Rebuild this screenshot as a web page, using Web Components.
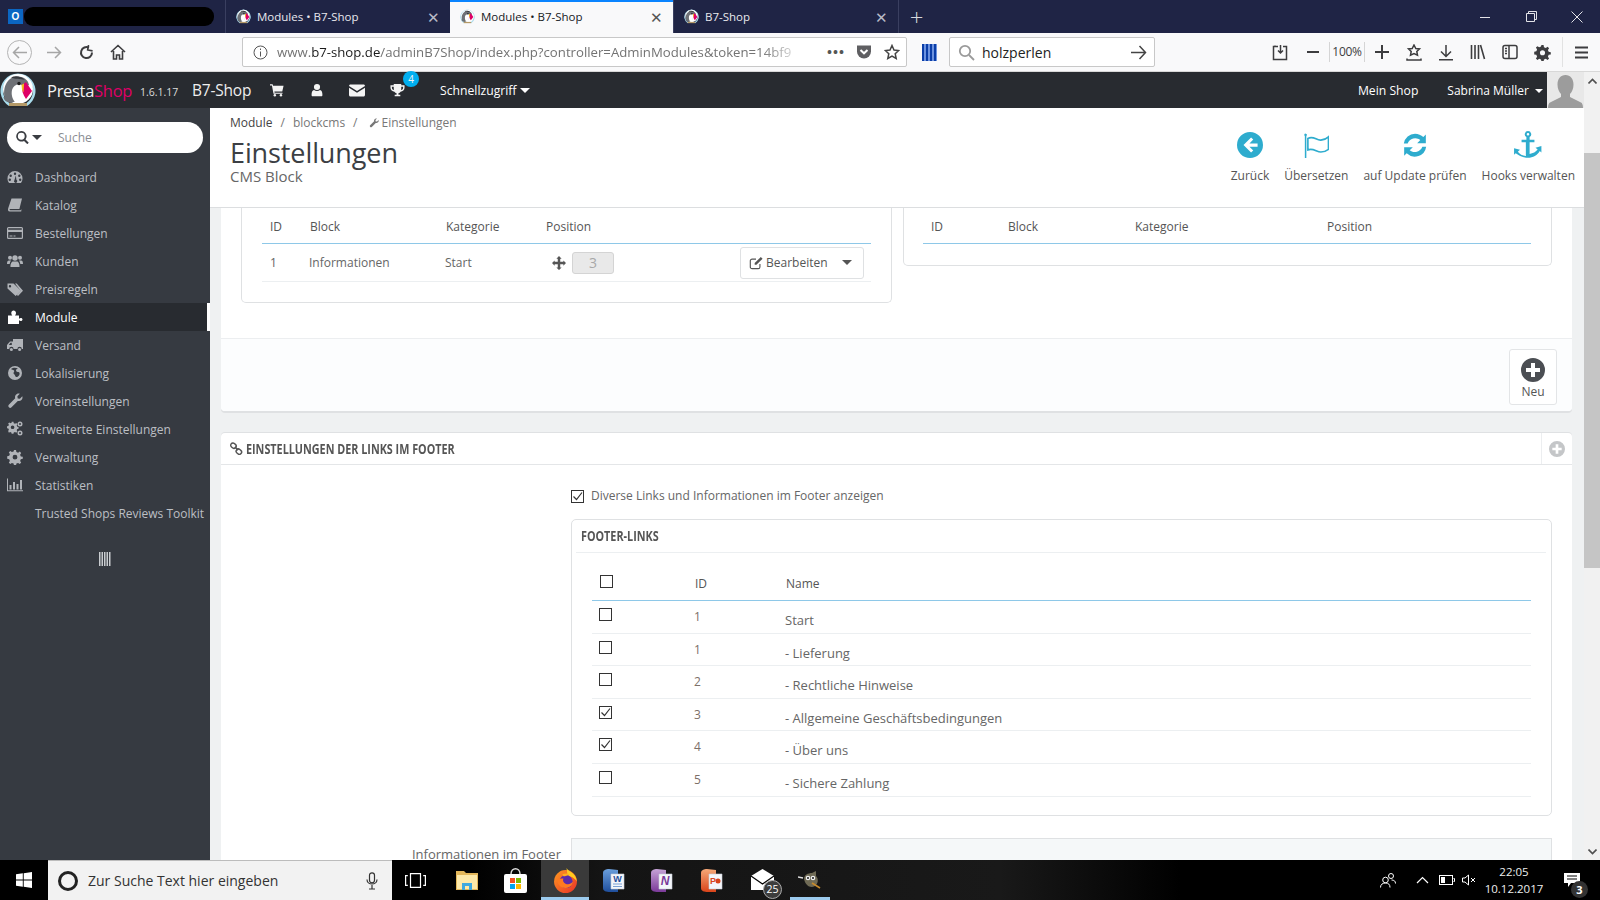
<!DOCTYPE html>
<html lang="de"><head><meta charset="utf-8"><title>Modules • B7-Shop</title>
<style>
html,body{margin:0;height:900px;overflow:hidden;background:#eff1f2}
body{display:flex;flex-direction:column;font-family:"Open Sans","Noto Sans",sans-serif}
</style></head><body>
<browser-chrome></browser-chrome>
<admin-workspace></admin-workspace>
<win-taskbar></win-taskbar>
<script>
const P={
dashboard:'<path fill-rule="evenodd" d="M8 2a7.5 7.5 0 0 0-7.5 7.5c0 1.7.6 3.2 1.6 4.5h11.800c1-1.300 1.600-2.800 1.600-4.500A7.500 7.500 0 0 0 8 2zM8 3.500a1.200 1.200 0 1 1 0 2.400 1.200 1.200 0 0 1 0-2.400zM3.700 5.500a1.200 1.200 0 1 1 0 2.400 1.200 1.200 0 0 1 0-2.400zM12.300 5.500a1.200 1.200 0 1 1 0 2.400 1.200 1.200 0 0 1 0-2.400zM2.800 9.500a1.200 1.200 0 1 1 0 2.400 1.200 1.200 0 0 1 0-2.400zM13.200 9.500a1.200 1.200 0 1 1 0 2.400 1.200 1.200 0 0 1 0-2.400zM8.800 6.500l.6 4.300a1.600 1.600 0 1 1-2 .4z"/>',
book:'<path d="M4.500 1.500H15l-2.600 10.500H3.200c-.8 0-.9 1.200 0 1.200h10.300l1-.9-.3 2.200H2.700C1 14.500.7 12.800 1.200 11.200z"/>',
card:'<path fill-rule="evenodd" d="M1.500 2h13A1.500 1.500 0 0 1 16 3.500v9a1.500 1.500 0 0 1-1.500 1.500h-13A1.500 1.500 0 0 1 0 12.500v-9A1.500 1.500 0 0 1 1.500 2zM1.200 3.200v1.600h13.600V3.200zM1.200 7v5.800h13.600V7zM2.500 10.500h3v1h-3zM6.500 10.500h2v1h-2z"/>',
users:'<circle cx="8" cy="5" r="2.700"/><circle cx="3" cy="4.800" r="2"/><circle cx="13" cy="4.800" r="2"/><path d="M3.500 14c-.3-3 1-5.500 2.500-5.500h4c1.500 0 2.800 2.500 2.500 5.500zM0 11c0-2.500.7-3.500 2-3.500h2C3.200 8.500 2.800 9.800 2.700 11zM16 11c0-2.500-.7-3.500-2-3.500h-2c.8 1 1.200 2.300 1.300 3.500z"/>',
tags:'<path fill-rule="evenodd" d="M.5 2.500h6L14 9.800l-5.300 5.200L.5 7.500zM3 4a1.200 1.200 0 1 0 0 2.400A1.200 1.200 0 0 0 3 4z"/><path d="M8 2.500h1.700L16 9.800l-5 5.200-1.200-1.200 3.800-4z"/>',
puzzle:'<path d="M1 6.500h4.300C4.500 5.500 4.300 4.800 4.300 4c0-1.400 1-2.500 2.300-2.500S9 2.600 9 4c0 .8-.2 1.500-1 2.500h4v3.200c.8-.5 1.200-.7 1.800-.7 1 0 1.700.7 1.700 1.500s-.7 1.500-1.700 1.500c-.6 0-1-.2-1.800-.7V15H1z"/>',
truck:'<path fill-rule="evenodd" d="M6 2h10v10h-1.200a2.200 2.200 0 0 0-4.400 0H6.600a2.200 2.200 0 0 0-4.400 0H0V8l3-3.500h3zM1.800 8h3V5.700H3.600z"/><circle cx="4.400" cy="12.500" r="1.500"/><circle cx="12.600" cy="12.500" r="1.500"/>',
globe:'<path fill-rule="evenodd" d="M8 1a7 7 0 1 1 0 14A7 7 0 0 1 8 1zM4 4c1 1 2 .5 3 1.500S5.500 8 7 9s1 3 2.500 3 3.500-2 3-4-2-.5-3-1.500S9 4 11 3.500C9 2.300 6 2.300 4 4z"/>',
wrench:'<path d="M15.500 4.500c0 2.400-2.400 4.200-4.700 3.400L4.500 14.200a1.800 1.800 0 0 1-2.700-2.500l6.400-6.400C7.400 3 9.200.6 11.500.6c.5 0 .9.100 1.300.2L10.400 3.200l.3 2.200 2.200.3 2.400-2.400c.1.300.2.700.2 1.200z"/>',
gears:'<path fill-rule="evenodd" d="M4.500 3h2l.3 1.500 1.400.6 1.300-.8 1.300 1.300-.8 1.300.6 1.400 1.400.3v2l-1.400.3-.6 1.400.8 1.300-1.300 1.300-1.300-.8-1.400.6-.3 1.300h-2l-.3-1.300-1.400-.6-1.300.8L.7 13.100l.8-1.300-.6-1.400L-.5 10V8l1.400-.3.6-1.400-.8-1.300L2 3.700l1.300.8 1.400-.6zM5.500 7a2 2 0 1 0 0 4 2 2 0 0 0 0-4z" transform="translate(.5 -2) scale(.92)"/><path fill-rule="evenodd" d="M13 .5a2.500 2.500 0 1 1 0 5 2.500 2.500 0 0 1 0-5zm0 1.500a1 1 0 1 0 0 2 1 1 0 0 0 0-2zM13 9.500a2.500 2.500 0 1 1 0 5 2.500 2.500 0 0 1 0-5zm0 1.500a1 1 0 1 0 0 2 1 1 0 0 0 0-2z"/>',
gear:'<path fill-rule="evenodd" d="M7 1h2l.4 2 1.700.7 1.700-1.100 1.400 1.400-1.100 1.700.7 1.700 2 .4v2l-2 .4-.7 1.700 1.100 1.700-1.400 1.400-1.700-1.100-1.700.7-.4 2H7l-.4-2-1.700-.7-1.700 1.100-1.400-1.400 1.100-1.700-.7-1.700-2-.4V7.200l2-.4.7-1.700-1.100-1.700 1.400-1.400 1.700 1.100 1.700-.7zM8 5.800a2.400 2.400 0 1 0 0 4.800 2.400 2.400 0 0 0 0-4.800z"/>',
chart:'<path d="M0 1.500h1v11.800h15v1H0zM2.500 8h2v4.500h-2zM6 5h2v7.500H6zM9.500 7h2v5.500h-2zM13 3h2v9.500h-2z"/>',
search:'<path fill-rule="evenodd" d="M6.500 0a6.500 6.500 0 0 1 5.200 10.400l4 4-1.800 1.800-4-4A6.500 6.500 0 1 1 6.500 0zm0 2.300a4.200 4.200 0 1 0 0 8.400 4.200 4.200 0 0 0 0-8.400z"/>',
cart:'<path d="M0 1.500h3l.5 1.700H15.500l-1.500 6.500H5l.3 1.300h9v1.300H4L2.200 2.800H0z"/><circle cx="5.500" cy="14" r="1.400"/><circle cx="12.500" cy="14" r="1.400"/>',
user:'<circle cx="8" cy="4.500" r="3.500"/><path d="M3 15c-.8 0-1.200-.6-1.200-1.400 0-3 .8-5.300 2.800-5.600 1 .8 2 1.200 3.400 1.200s2.400-.4 3.400-1.200c2 .3 2.800 2.600 2.800 5.600 0 .8-.4 1.400-1.200 1.400z"/>',
mail:'<path d="M1.500 2.500h13c.8 0 1.500.7 1.500 1.500L8 9 0 4c0-.8.7-1.500 1.500-1.500zM0 5.800l8 5 8-5V13c0 .8-.7 1.500-1.500 1.500h-13C.7 14.500 0 13.800 0 13z"/>',
trophy:'<path fill-rule="evenodd" d="M4 1h8v1.500h3.500V5c0 2.500-2 4-4.200 4.300-.5.800-1.300 1.300-2.300 1.500V12.500h2V14H5v-1.500h2v-1.700c-1-.2-1.800-.7-2.300-1.500C2.500 9 .5 7.500.5 5V2.500H4zM2 4v1c0 1.200.8 2 2.200 2.500C4 6.500 4 5 4 4zM14 4h-2c0 1 0 2.500-.2 3.500C13.200 7 14 6.200 14 5z"/>',
back:'<path fill-rule="evenodd" d="M12 0a12 12 0 1 1 0 24 12 12 0 0 1 0-24zM13 5 6 12l7 7 2-2-3.500-3.500H19v-3h-7.500L15 7z"/>',
flag:'<path d="M2.500 1.500a1.200 1.200 0 0 1 .6 2.200V24H1.700V3.700a1.200 1.200 0 0 1 .8-2.200z"/><path fill="none" stroke="currentColor" stroke-width="1.500" d="M4.500 6c5-3 8 2 12 1.500 3-.3 5.500-1.500 7-3V16c-2 1.500-4 2.500-7 2.500-4 0-7-4-12-2z"/>',
sync:'<path d="M12 1.500c3 0 5.700 1.200 7.700 3.100l2.300-2.300v8h-8l2.900-2.900A7.500 7.500 0 0 0 5.200 10.500H1.700A10.700 10.700 0 0 1 12 1.500zM2 14h8l-2.900 2.900a7.500 7.500 0 0 0 11.700-3.400h3.500A10.700 10.700 0 0 1 4.300 19.700L2 22z"/>',
anchor:'<path fill-rule="evenodd" d="M14 0a3 3 0 0 1 1.500 5.600V8H20v2.500h-4.500v10.800c3-.3 6-1.800 7.500-4l-2-1.800 5.500-1.500v6l-1.500-1.300C23 22.500 18.500 25 14 25S5 22.500 2.500 20.700L1 22v-6l5.500 1.500-2 1.800c1.500 2.200 4.500 3.700 7.500 4V10.500H8V8h4.500V5.600A3 3 0 0 1 14 0zm0 1.800a1.200 1.200 0 1 0 0 2.400 1.200 1.200 0 0 0 0-2.400z"/>',
plusc:'<path fill-rule="evenodd" d="M12 0a12 12 0 1 1 0 24 12 12 0 0 1 0-24zM10 5v5H5v4h5v5h4v-5h5v-4h-5V5z"/>',
link:'<g fill="none" stroke="currentColor" stroke-width="1.800"><rect x="1" y="1.500" width="7" height="5.500" rx="2.700" transform="rotate(40 4 4)"/><rect x="8" y="9" width="7" height="5.500" rx="2.700" transform="rotate(40 11 11)"/><path d="M6 6l4 4"/></g>',
move:'<path d="M8 0l3 3H9.400v3.600H13V5l3 3-3 3V9.400H9.400V13H11l-3 3-3-3h1.600V9.400H3V11L0 8l3-3v1.600h3.600V3H5z"/>',
edit:'<path fill="none" stroke="currentColor" stroke-width="1.300" d="M12.500 9v3.500a2 2 0 0 1-2 2h-7a2 2 0 0 1-2-2v-7a2 2 0 0 1 2-2H8"/><path d="M13.500 1 15.500 3l-7 7H6.500V8z"/>'
};
function def(name,css,html){
 customElements.define(name,class extends HTMLElement{
  connectedCallback(){ if(this.shadowRoot)return; const s=this.attachShadow({mode:'open'}); s.innerHTML='<style>'+css+'</style>'+html(this); }
 });
}
const a=(e,n,d='')=>e.getAttribute(n)??d;
def('x-icon',':host{display:inline-flex;line-height:0;flex:none}svg{display:block}',e=>{
 const s=a(e,'size','16'),w=a(e,'w',s),vb=a(e,'vb','0 0 16 16');
 return `<svg width="${w}" height="${s}" viewBox="${vb}" fill="currentColor" aria-hidden="true">${P[a(e,'name')]||''}</svg>`;
});
def('ps-logo',':host{display:inline-flex;line-height:0;flex:none}',e=>{
 const s=a(e,'size','16');
 return `<svg width="${s}" height="${s}" viewBox="0 0 36 36" aria-hidden="true"><path d="M9 34A17.500 17.500 0 1 1 27 34l-1-2.500A15 15 0 1 0 10 31.500z" fill="#a9dcec"/><circle cx="18" cy="17" r="15" fill="#fff"/><path d="M4.500 25C2.500 13 9 4.500 17.500 4.500c6 0 10.500 3 11.500 8.500l-7 3-3 12-8 3c-4-1-7-2-7.500-6z" fill="#6e7176"/><path d="M11 5.500c4-2 10-1.500 14 2.500-5-1.500-10-.5-14-2.500z" fill="#35383d"/><path d="M12 18c1-4 4-6 8-5.500 2 .2 3 1.200 3 3l-3 12.500-4.500 2.500c-3-3-4.500-7.500-3.500-12.500z" fill="#fff"/><circle cx="19" cy="11.500" r="1.700" fill="#1c1c1c"/><path d="M22 13l4-3 6 9-6 8c-3-4-4.500-9-4-14z" fill="#df0067"/><path d="M21.500 13l2.500-1.500-.5 9-1.500-3z" fill="#f5c518"/><path d="M9 31h18v3H9z" fill="#b59a68"/></svg>`;
});

def('browser-tab',`:host{display:flex;align-items:center;box-sizing:border-box;height:33px;width:225px;padding:0 10px 0 10px;color:#e9e9ee;font:11.500px "Open Sans",sans-serif;border-left:1px solid #3a3f60}
:host([active]){background:#f9f9fa;color:#16181d;border-top:2px solid #0a84ff;border-left:0;width:223px;padding-bottom:2px}
:host([active])+*{border-left:0}
.t{flex:1;margin-left:6px;white-space:nowrap}.x{font:300 15px "Open Sans",sans-serif;color:#b8bac5}:host([active]) .x{color:#555}`,
e=>`<ps-logo size="15"></ps-logo><span class="t"><slot></slot></span><span class="x">✕</span>`);

def('tb-btn',':host{display:flex;align-items:center;justify-content:center;color:#3d3d3f;flex:none;width:32px;height:38px}',e=>`<slot></slot>`);

def('browser-chrome',`:host{display:block;flex:none;height:72px;font-family:"Open Sans",sans-serif}
.title{height:33px;background:#1f2445;display:flex;align-items:center;color:#ddd}
.pin{width:24px;display:flex;padding-left:8px;box-sizing:border-box}
.o{width:15px;height:15px;background:#0b66c2;color:#fff;font:700 10px/15px "Liberation Sans",sans-serif;text-align:center}
.black{width:190px;height:19px;background:#000;border-radius:9px;margin-right:11px}
.plus{width:36px;text-align:center;font:300 24px/33px "Open Sans",sans-serif;border-left:1px solid #3a3f60;box-sizing:border-box;color:#d6d7dd}
.sp{flex:1}.win{width:46px;text-align:center;display:flex;justify-content:center;color:#e3e3e8}
.bar{height:38px;background:#f9f9fa;display:flex;align-items:center;border-bottom:1px solid #d8d8d8;color:#3d3d3f}
.navback{width:25px;height:25px;border:1px solid #b4b4b4;border-radius:50%;margin:0 6px 0 7px;display:flex;align-items:center;justify-content:center;box-sizing:border-box;color:#a6a6a6}
.url{width:665px;height:30px;box-sizing:border-box;margin-left:108px;background:#fff;border:1px solid #c8c8c8;border-radius:2px;display:flex;align-items:center;padding-left:10px;font-size:13.200px;color:#737373;white-space:nowrap;overflow:hidden}
.url b{font-weight:400;color:#1a1a1a}
.u{width:520px;overflow:hidden;margin-left:9px;-webkit-mask-image:linear-gradient(90deg,#000 93%,rgba(0,0,0,.2))}
.grid{width:15px;height:17px;background:repeating-linear-gradient(90deg,#0b3ea8 0 2px,#6d93df 2px 4px);margin:0 12px 0 15px;flex:none}
.search{width:206px;height:30px;box-sizing:border-box;background:#fff;border:1px solid #c8c8c8;border-radius:2px;display:flex;align-items:center;padding:0 7px 0 8px;font-size:14px;color:#222;flex:none}
.search span{flex:1;margin-left:7px}
.mini{display:flex;align-items:center;margin-left:109px}
.i{width:32px;display:flex;justify-content:center;flex:none}
.z{font-size:12px;width:34px;text-align:center;border:solid #d5d5d5;border-width:0 1px;line-height:20px;letter-spacing:-.3px}`,
e=>`<div class="title"><div class="pin"><div class="o">O</div></div><div class="black"></div>
<browser-tab>Modules • B7-Shop</browser-tab><browser-tab active>Modules • B7-Shop</browser-tab><browser-tab>B7-Shop</browser-tab>
<div class="plus">+</div><div class="sp"></div>
<div class="win"><svg width="10" height="10"><path d="M0 5.500h10" stroke="currentColor"/></svg></div>
<div class="win"><svg width="11" height="11" fill="none" stroke="currentColor"><path d="M.5 2.500h8v8h-8zM2.500 2.500v-2h8v8h-2"/></svg></div>
<div class="win"><svg width="12" height="12" stroke="currentColor"><path d="M.5.500l11 11M11.500.500l-11 11"/></svg></div></div>
<div class="bar"><div class="navback"><svg width="15" height="13" fill="none" stroke="currentColor" stroke-width="1.500"><path d="M7 1 1.500 6.500 7 12M2 6.500h13"/></svg></div>
<tb-btn><svg width="15" height="13" fill="none" stroke="#a6a6a6" stroke-width="1.500"><path d="M8 1l5.500 5.500L8 12M13 6.500H0"/></svg></tb-btn>
<tb-btn><svg width="15" height="15" fill="none" stroke="currentColor" stroke-width="2"><path d="M13 7.500A5.500 5.500 0 1 1 10 2.700"/><path d="M9 0v5h5" stroke-width="1.600" stroke-linejoin="miter" transform="rotate(10 9 3)"/></svg></tb-btn>
<tb-btn><svg width="16" height="16" fill="none" stroke="currentColor" stroke-width="1.600"><path d="M1 8l7-6.500L15 8M3.500 7v8h3v-4h3v4h3V7"/></svg></tb-btn>
<div class="url"><svg style="flex:none" width="15" height="15" fill="none" stroke="#555"><circle cx="7.500" cy="7.500" r="6.500"/><path d="M7.500 6.500v5M7.500 3.500v1.500"/></svg>
<div class="u">www.<b>b7-shop.de</b>/adminB7Shop/index.php?controller=AdminModules&amp;token=14bf9</div>
<span style="margin-left:30px;letter-spacing:1px;font-weight:700;color:#555;width:23px">•••</span>
<svg style="margin-left:6px;flex:none" width="16" height="16"><path d="M1 1.500h14v6a7 7 0 0 1-14 0z" fill="#5f5f62"/><path d="M4.500 6l3.500 3.300L11.500 6" stroke="#fff" stroke-width="2" fill="none"/></svg>
<svg style="margin-left:12px;flex:none" width="16" height="16" fill="none" stroke="#444" stroke-width="1.500"><path d="M8 1.500l2 4.500 4.700.5-3.500 3.200 1 4.700L8 12l-4.200 2.400 1-4.700L1.300 6.500 6 6z"/></svg></div>
<div class="grid"></div>
<div class="search"><svg width="17" height="17" fill="none" stroke="#9a9a9a" stroke-width="1.800"><circle cx="7" cy="7" r="5.200"/><path d="M11 11l5 5"/></svg><span>holzperlen</span><svg width="16" height="15" fill="none" stroke="#444" stroke-width="1.500"><path d="M8.500 1l6 6.500-6 6.500M14 7.500H0"/></svg></div>
<div class="mini">
<div class="i"><svg width="16" height="17" fill="none" stroke="currentColor" stroke-width="1.500"><path d="M6 2.500H3v-1M11 2.500h3.500v13h-13v-13H6M8.500 1v8M6 6.500l2.500 2.500L11 6.500"/></svg></div>
<div class="i" style="width:33px"><svg width="12" height="4"><path d="M0 2h12" stroke="currentColor" stroke-width="2"/></svg></div>
<div class="z">100%</div>
<div class="i" style="width:33px"><svg width="14" height="14"><path d="M7 0v14M0 7h14" stroke="currentColor" stroke-width="2"/></svg></div>
<div class="i"><svg width="16" height="17" fill="none" stroke="currentColor" stroke-width="1.500"><path d="M8 1l1.800 3.500 3.700.4-2.700 2.600.7 3.700L8 9.500l-3.500 1.700.7-3.700-2.700-2.600 3.700-.4zM1 14.500v1.500h14v-1.500"/></svg></div>
<div class="i"><svg width="16" height="17" fill="none" stroke="currentColor" stroke-width="1.500"><path d="M8 1v11M3 7.500l5 5 5-5M1 15.800h14"/></svg></div>
<div class="i"><svg width="16" height="16" fill="none" stroke="currentColor" stroke-width="1.600"><path d="M1.500 1v14M5 1v14M8.500 1v14M10.500 1l4 14"/></svg></div>
<div class="i"><svg width="16" height="16" fill="none" stroke="currentColor" stroke-width="1.500"><rect x="1" y="1.500" width="14" height="13" rx="2"/><path d="M7 1.500v13M3 4.500h2M3 7h2M3 9.500h2"/></svg></div>
<div class="i"><x-icon name="gear" size="17"></x-icon></div>
<div class="i" style="width:1px;height:30px;background:#e2e2e2;margin:0 0 0 4px"></div>
<div class="i" style="width:36px"><svg width="13" height="13"><path d="M0 1.500h13M0 6.500h13M0 11.500h13" stroke="currentColor" stroke-width="2"/></svg></div>
</div></div>`);

def('admin-workspace',`:host{flex:1;min-height:0;display:grid;grid-template:36px minmax(0,1fr)/210px minmax(0,1fr) 16px}
ps-header{grid-column:1/3}ps-scrollbar{grid-column:3;grid-row:1/3}main{overflow:hidden;min-width:0;display:flex;flex-direction:column}
.content{padding:0 12px 0 11px;display:flex;flex-direction:column;gap:22px}`,
e=>`<ps-header></ps-header><ps-scrollbar></ps-scrollbar><ps-sidebar></ps-sidebar>
<main><ps-pagehead></ps-pagehead><div class="content"><ps-blocks></ps-blocks><ps-footerform></ps-footerform></div></main>`);

def('ps-header',`:host{display:flex;align-items:center;background:#282b30;color:#fff;font:12.200px "Open Sans",sans-serif;white-space:nowrap}
.brand{font:400 16.500px "Open Sans",sans-serif;margin-left:11px;letter-spacing:-.3px;width:93px;color:#f2f2f2}.brand i{font-style:normal;color:#df0067}
.ver{font-size:10.500px;width:52px;color:#ddd;padding-top:3px}.shop{font-size:15.500px;width:65px;color:#eee;letter-spacing:-.2px}
.ic{width:40px;display:flex;justify-content:center;color:#f4f4f4;position:relative}
.badge{position:absolute;left:26px;top:-12px;width:16px;height:16px;border-radius:50%;background:#00aff0;font-size:10px;line-height:16px;text-align:center}
.quick{margin-left:23px}.sp{flex:1}.c{display:inline-block;border:5px solid transparent;border-top-color:currentColor;border-bottom:0;margin-left:3px;vertical-align:2px}
.me{margin:0 29px 0 0}.who{margin-right:4px;font-size:12px}
.av{width:37px;height:36px;background:#e8e8e8;display:flex;align-items:flex-end;justify-content:center}`,
e=>`<ps-logo size="36"></ps-logo><span class="brand">Presta<i>Shop</i></span><span class="ver">1.6.1.17</span><span class="shop">B7-Shop</span>
<span class="ic"><x-icon name="cart" size="14"></x-icon></span><span class="ic"><x-icon name="user" size="14"></x-icon></span><span class="ic"><x-icon name="mail" size="16"></x-icon></span><span class="ic"><x-icon name="trophy" size="15"></x-icon><span class="badge">4</span></span>
<span class="quick">Schnellzugriff<span class="c"></span></span><span class="sp"></span><span class="me">Mein Shop</span><span class="who">Sabrina Müller <span class="c" style="border-width:4px 4px 0"></span></span>
<span class="av"><svg width="35" height="33" viewBox="0 0 35 33" fill="#9c9c9c"><path d="M17.500 0c5 0 8 4 8 9.500 0 4-1.500 7.500-3.500 9.500v3l11 5.500c1 .5 2 2 2 5.500H0c0-3.500 1-5 2-5.500L13 22v-3c-2-2-3.500-5.500-3.500-9.500C9.500 4 12.500 0 17.500 0z"/></svg></span>`);

def('ps-scrollbar',`:host{display:flex;flex-direction:column;background:#f1f1f1;align-items:stretch;min-height:0}
.ar{height:17px;display:flex;align-items:center;justify-content:center;color:#505050}
.thumb{height:415px;margin-top:64px;background:#c5c5c5}.sp{flex:1}`,
e=>`<div class="ar"><svg width="9" height="6" fill="none" stroke="currentColor" stroke-width="1.600"><path d="M.5 5.500l4-4 4 4"/></svg></div><div class="thumb"></div><div class="sp"></div><div class="ar"><svg width="9" height="6" fill="none" stroke="currentColor" stroke-width="1.600"><path d="M.5.500l4 4 4-4"/></svg></div>`);

def('side-item',`:host{display:flex;align-items:center;height:28px;color:#bcbfc4;font:12px "Open Sans",sans-serif;white-space:nowrap;box-sizing:border-box}
.i{width:35px;flex:none;display:flex;justify-content:center;padding-right:5px;box-sizing:border-box;color:#b0b3b8}
:host([active]){background:#282b30;color:#fff;border-right:3px solid #fff}:host([active]) .i{color:#fff}`,
e=>`<span class="i">${a(e,'icon')?`<x-icon name="${a(e,'icon')}" size="16"></x-icon>`:''}</span><slot></slot>`);

def('ps-sidebar',`:host{display:block;background:#363a41;min-height:0;overflow:hidden}
.s{margin:14px 7px 10px;height:31px;background:#fff;border-radius:16px;display:flex;align-items:center;padding-left:9px;color:#3a3d42;font:12px "Open Sans",sans-serif}
.s span{color:#8a8d92;margin-left:16px}.c{border:5px solid transparent;border-top-color:#3a3d42;border-bottom:0;margin-left:3px}
.col{display:flex;justify-content:center;margin-top:25px}`,
e=>`<div class="s"><x-icon name="search" size="13"></x-icon><i class="c"></i><span>Suche</span></div>
<side-item icon="dashboard">Dashboard</side-item><side-item icon="book">Katalog</side-item><side-item icon="card">Bestellungen</side-item><side-item icon="users">Kunden</side-item><side-item icon="tags">Preisregeln</side-item><side-item icon="puzzle" active>Module</side-item><side-item icon="truck">Versand</side-item><side-item icon="globe">Lokalisierung</side-item><side-item icon="wrench">Voreinstellungen</side-item><side-item icon="gears">Erweiterte Einstellungen</side-item><side-item icon="gear">Verwaltung</side-item><side-item icon="chart">Statistiken</side-item><side-item>Trusted Shops Reviews Toolkit</side-item>
<div class="col"><svg width="12" height="14" fill="#c9ccd0"><path d="M0 0h1.500v14H0zM2.500 0H4v14H2.500zM5 0h1.500v14H5zM7.500 0H9v14H7.500zM10 0h1.500v14H10z"/></svg></div>`);

def('head-tool',`:host{display:flex;flex-direction:column;align-items:center;gap:8px;color:#555;font:12px "Open Sans",sans-serif;white-space:nowrap}.i{color:#2eacce;height:28px;display:flex;align-items:center}`,
e=>`<span class="i"><x-icon name="${a(e,'icon')}" size="${a(e,'size','26')}" vb="${a(e,'vb','0 0 24 24')}"></x-icon></span><slot></slot>`);

def('ps-pagehead',`:host{display:flex;flex:none;height:100px;box-sizing:border-box;background:#fff;border-bottom:1px solid #dcdee0;padding:0 9px 0 20px;justify-content:space-between;color:#555}
.crumb{font-size:12px;margin-top:6px;color:#777;display:flex;gap:8px;align-items:center}.crumb b{font-weight:400;color:#444}
h1{font:400 27px/31px "Open Sans",sans-serif;margin:6px 0 0;color:#3c3f44;letter-spacing:-.1px}h2{font:400 15px/16px "Open Sans",sans-serif;margin:0;color:#666}
.tools{display:flex;gap:15px;padding-top:23px;align-items:flex-start}`,
e=>`<div><div class="crumb"><b>Module</b><span>/</span><span>blockcms</span><span>/</span><span style="display:flex;gap:3px;align-items:center;margin-left:3px"><x-icon name="wrench" size="10"></x-icon>Einstellungen</span></div><h1>Einstellungen</h1><h2>CMS Block</h2></div>
<div class="tools"><head-tool icon="back">Zurück</head-tool><head-tool icon="flag">Übersetzen</head-tool><head-tool icon="sync">auf Update prüfen</head-tool><head-tool icon="anchor" vb="0 0 28 26" size="30">Hooks verwalten</head-tool></div>`);

def('ps-blocks',`:host{display:block;background:#fff;border-radius:0 0 4px 4px;box-shadow:0 2px 0 #dfe1e3;font:12px "Open Sans",sans-serif;color:#666}
.top{display:flex;gap:11px;padding:0 20px;height:130px;align-items:flex-start}
.card{box-sizing:border-box;background:#fff;border:1px solid #dfe1e3;border-top:0;border-radius:0 0 5px 5px;padding:0 20px}
.l{width:651px;height:95px}.r{width:649px;height:58px}
.h,.row{display:grid;align-items:center}
.h{height:36px;box-sizing:border-box;padding-top:2px;border-bottom:1px solid #8ec8e8;color:#555}
.l .h,.l .row{grid-template-columns:48px 136px 100px 1fr}.l .h span:first-child,.l .row span:first-child{padding-left:8px}
.r .h{grid-template-columns:85px 127px 192px 1fr;margin-left:-1px}.r .h span:first-child{padding-left:8px}
.row{height:38px;box-sizing:border-box;border-bottom:1px solid #eceff1}
.row>span:nth-child(2){margin-left:-1px}.row>span:nth-child(3){margin-left:-1px}
.pos{display:flex;align-items:center;justify-content:space-between;padding-right:7px;color:#555}
.num{width:42px;height:22px;box-sizing:border-box;background:#e9e9e9;border:1px solid #d4d4d4;border-radius:3px;color:#a8a8a8;text-align:center;line-height:20px;font-size:14px;margin-left:6px;margin-right:auto}
.btn{width:124px;height:32px;box-sizing:border-box;border:1px solid #dfe1e3;border-radius:3px;display:flex;align-items:center;padding-left:8px;gap:3px;color:#555;background:#fff}
.car{border:5px solid transparent;border-top-color:#555;border-bottom:0;margin-left:auto;margin-right:11px}
.foot{height:73px;box-sizing:border-box;background:#fcfdfe;border-top:1px solid #eceef0;border-radius:0 0 4px 4px;display:flex;justify-content:flex-end;padding:10px 15px 0 0}
.neu{width:48px;height:56px;box-sizing:border-box;background:#fff;border:1px solid #e3e5e7;border-radius:3px;display:flex;flex-direction:column;align-items:center;padding-top:8px;color:#555;gap:1px;font-size:12px}
.neu x-icon{color:#4b4e53}`,
e=>`<div class="top"><div class="card l"><div class="h"><span>ID</span><span>Block</span><span>Kategorie</span><span>Position</span></div>
<div class="row"><span>1</span><span>Informationen</span><span>Start</span><div class="pos"><x-icon name="move" size="14" style="margin-left:6px"></x-icon><span class="num">3</span><span class="btn"><x-icon name="edit" size="14"></x-icon>Bearbeiten<i class="car"></i></span></div></div></div>
<div class="card r"><div class="h"><span>ID</span><span>Block</span><span>Kategorie</span><span>Position</span></div></div></div>
<div class="foot"><div class="neu"><x-icon name="plusc" size="24" vb="0 0 24 24"></x-icon>Neu</div></div>`);

def('ps-check',`:host{display:inline-flex;width:13px;height:13px;box-sizing:border-box;border:1px solid #333;background:#fff;flex:none;align-items:center;justify-content:center}svg{display:block}`,
e=>e.hasAttribute('checked')?`<svg width="11" height="11" fill="none" stroke="#333" stroke-width="1.200"><path d="M1.500 5.500 4.500 8.500 10 1.500"/></svg>`:'');

def('footer-row',`:host{display:grid;grid-template-columns:102px 91px 1fr;height:32.600px;box-sizing:border-box;border-bottom:1px solid #eceff1;font:13px "Open Sans",sans-serif;color:#666;align-items:start}
ps-check{margin:7px 0 0 7px}.id{margin-top:7px;font-size:12px;color:#7c6f68;line-height:18px}.n{margin-top:10px;line-height:18px}`,
e=>`<span><ps-check ${e.hasAttribute('checked')?'checked':''}></ps-check></span><span class="id">${a(e,'num')}</span><span class="n"><slot></slot></span>`);

def('narrow-text',`:host{display:inline-block;white-space:nowrap;font:700 13.500px "Open Sans",sans-serif;transform:scaleX(.8);transform-origin:0 50%}`,e=>`<slot></slot>`);

def('ps-footerform',`:host{display:block;background:#fff;border-radius:4px 4px 0 0;box-shadow:0 -1px 0 #dfe1e3;font:12px "Open Sans",sans-serif;color:#666;height:500px}
.head{height:32px;box-sizing:border-box;border-bottom:1px solid #e4e6e8;display:flex;align-items:center;padding-left:9px;gap:3px;color:#555}
.head .t{flex:1;min-width:0}.head .p{width:30px;align-self:stretch;border-left:1px solid #eceef0;display:flex;align-items:center;justify-content:center;color:#c4c6c8}
.f{padding:24px 20px 0 350px}
.chk{display:flex;align-items:center;gap:7px;height:14px}.chk span{margin-bottom:2px}
.card{margin-top:16px;height:297px;box-sizing:border-box;border:1px solid #dfe1e3;border-radius:5px;padding:0 20px 0 4px}
.ct{height:32px;margin-right:-15px;border-bottom:1px solid #eceff1;display:flex;align-items:center;padding-left:5px;color:#555}
.tb{margin:0 0 0 16px}.th{height:48px;box-sizing:border-box;border-bottom:1px solid #8ec8e8;display:grid;grid-template-columns:103px 91px 1fr;align-items:start;font-size:12px;color:#555}
.th ps-check{margin:22px 0 0 8px}.th .tx{margin-top:22px;line-height:18px}
.lab{margin:22px 0 0 0;background:#f5f8f9;border:1px solid #dfe1e3;height:60px}
.row{position:relative}.lt{position:absolute;right:100%;top:10px;margin-right:10px;white-space:nowrap;font-size:13px;line-height:12px;color:#666}`,
e=>`<div class="head"><x-icon name="link" size="13"></x-icon><span class="t"><narrow-text>EINSTELLUNGEN DER LINKS IM FOOTER</narrow-text></span><span class="p"><x-icon name="plusc" size="16" vb="0 0 24 24"></x-icon></span></div>
<div class="f"><div class="chk"><ps-check checked></ps-check><span>Diverse Links und Informationen im Footer anzeigen</span></div>
<div class="card"><div class="ct"><narrow-text>FOOTER-LINKS</narrow-text></div><div class="tb"><div class="th"><span><ps-check></ps-check></span><span class="tx">ID</span><span class="tx">Name</span></div>
<footer-row num="1">Start</footer-row><footer-row num="1">- Lieferung</footer-row><footer-row num="2">- Rechtliche Hinweise</footer-row><footer-row num="3" checked>- Allgemeine Geschäftsbedingungen</footer-row><footer-row num="4" checked>- Über uns</footer-row><footer-row num="5">- Sichere Zahlung</footer-row></div></div>
<div class="row"><span class="lt">Informationen im Footer</span><div class="lab"></div></div></div>`);

def('task-app',`:host{display:flex;height:40px;align-items:center;justify-content:center;box-sizing:border-box;flex:none;position:relative}
:host([on]){background:#3a3a3a;border-bottom:3px solid #9ccbee;padding-top:3px}:host([line]){border-bottom:3px solid #9ccbee;padding-top:3px}`,e=>`<slot></slot>`);

const doc=(c1,c2,id,l)=>`<svg width="24" height="25" viewBox="0 0 24 25"><defs><linearGradient id="${id}" x1="0" y1="0" x2="0" y2="1"><stop offset="0" stop-color="${c1}"/><stop offset="1" stop-color="${c2}"/></linearGradient></defs><path d="M8 1l9 1v22l-8 0C5 24 2 23 2 20V5c0-3 3-4 6-4z" fill="url(#${id})"/><path d="M10 6h13v15H10z" fill="#f4f6fa" stroke="#c8ccd6" stroke-width=".6"/>${l}</svg>`;

def('win-taskbar',`:host{display:flex;flex:none;height:40px;align-items:center;color:#fff;background:linear-gradient(90deg,#000 0,#000 470px,#141414 600px,#191919 1000px,#000 1180px);font:12px "Open Sans",sans-serif}
.start{width:48px;display:flex;justify-content:center}
.sb{width:344px;height:40px;box-sizing:border-box;background:#f2f2f2;border-top:1px solid #bcbcbc;display:flex;align-items:center;color:#333;font-size:14px;padding:0 14px 0 10px}
.sb span{flex:1;margin-left:10px}.c{width:20px;height:20px;box-sizing:border-box;border:3px solid #222;border-radius:50%}
.apps{display:flex;margin-left:-1px}.sp{flex:1}
.tray{display:flex;align-items:center;margin-right:12px}.clock{width:66px;text-align:center;line-height:17px;font-size:11.500px;color:#eee;margin:0 8px 0 4px}
.tray>svg{flex:none}
.nt{position:relative;width:33px;display:flex;justify-content:center}.b{position:absolute;left:16px;top:8px;width:17px;height:17px;border-radius:50%;background:#333;text-align:center;line-height:17px;font-size:11px;font-weight:700;color:#fff}
.cnt{position:absolute;left:26px;top:20px;width:19px;height:19px;border-radius:50%;background:#3d3d3d;border:1px solid #aaa;box-sizing:border-box;font-size:10.500px;line-height:17px;text-align:center;color:#fff}`,
e=>`<div class="start"><svg width="16" height="16" fill="#fff"><path d="M0 2.300 6.800 1.300v6.200H0zM7.700 1.200 16 0v7.500H7.700zM0 8.400h6.800v6.300L0 13.700zM7.700 8.400H16V16l-8.300-1.200z"/></svg></div>
<div class="sb"><div class="c"></div><span>Zur Suche Text hier eingeben</span><svg width="12" height="18" fill="none" stroke="#333" stroke-width="1.200"><rect x="3.500" y=".8" width="5" height="10" rx="2.500"/><path d="M1 7.500c0 6 10 6 10 0M6 13v4M3 17h6"/></svg></div>
<div class="apps">
<task-app style="width:48px"><svg width="21" height="15" fill="none" stroke="#fff" stroke-width="1.200"><path d="M5.500.6h10v13.800h-10zM2.800 2.600H.6v9.800h2.200M18.200 2.600h2.200v9.800h-2.200"/></svg></task-app>
<task-app style="width:56px"><svg width="22" height="20"><path d="M0 1h8l2 2h12v17H0z" fill="#e3b75a"/><path d="M1 5h20v14H1z" fill="#fde9a9"/><path d="M6 13h10v7h-3v-4H9v4H6z" fill="#3fa9e0"/></svg></task-app>
<task-app style="width:40px;margin-right:6px"><svg width="23" height="26"><path d="M7 7c0-7 9-7 9 0" fill="none" stroke="#ddd" stroke-width="1.400"/><rect y="7" width="23" height="19" rx="2" fill="#fff"/><rect x="6" y="11" width="5" height="5" fill="#f25022"/><rect x="12" y="11" width="5" height="5" fill="#7fba00"/><rect x="6" y="17" width="5" height="5" fill="#00a4ef"/><rect x="12" y="17" width="5" height="5" fill="#ffb900"/></svg></task-app>
<task-app on style="width:48px"><svg width="25" height="25" viewBox="0 0 24 24"><defs><linearGradient id="fx" x1="0" y1="0" x2="1" y2="1"><stop offset="0" stop-color="#ff9a1f"/><stop offset="1" stop-color="#e8302a"/></linearGradient></defs><circle cx="12" cy="13" r="11" fill="url(#fx)"/><path d="M13 0c2 4 9 4 10 13-3-4-6-5-9-5z" fill="#ffcb1f"/><circle cx="12.500" cy="13" r="6.300" fill="#5b2ba8"/><path d="M4 11c0 7 7 10 12 7 2-1 3-3 3-5-2 3-5 3-7 2s-3-3-2-5c-2 0-4 0-6 1z" fill="#ff7a1f"/><path d="M9 6c2-1 5-1 7 0-2 1-4 2-6 2z" fill="#ffb01f"/></svg></task-app>
<task-app style="width:48px">${doc('#6a9fdc','#1f4e9c','wd','<text x="16.500" y="14" font-family="Liberation Sans" font-size="9" font-weight="700" text-anchor="middle" fill="#1f4e9c">W</text><path d="M12 16h9M12 18.500h9" stroke="#7aa0d4"/>')}</task-app>
<task-app style="width:48px">${doc('#c5a2d6','#7b3a99','on','<text x="16" y="17" font-family="Liberation Sans" font-size="12" font-style="italic" font-weight="700" text-anchor="middle" fill="#7b3a99">N</text>')}</task-app>
<task-app style="width:52px">${doc('#f6a877','#d9441a','pp','<text x="14" y="16" font-family="Liberation Sans" font-size="9" font-weight="700" text-anchor="middle" fill="#d9441a">P</text><circle cx="19" cy="13" r="2.500" fill="#d9441a"/>')}</task-app>
<task-app style="width:50px"><svg width="25" height="24"><path d="M1 8 12.500 1 24 8v14H1z" fill="#fff"/><path d="M1 8l11.500 8L24 8" fill="none" stroke="#000" stroke-width="1.200"/></svg><span class="cnt">25</span></task-app>
<task-app line style="width:40px;margin-left:3px"><svg width="24" height="18"><path d="M6 8c0-4 4-6 8-6l4-2v5c3 3 2 8-1 10-4 2-9 1-11-7z" fill="#6f6a55"/><circle cx="10" cy="7" r="2.300" fill="#eee"/><circle cx="15" cy="7" r="2.300" fill="#eee"/><circle cx="10" cy="7" r=".9" fill="#000"/><circle cx="15" cy="7" r=".9" fill="#000"/><path d="M0 6l5 1" stroke="#ddd" stroke-width="1.500"/><path d="M14 12l8 5" stroke="#c78a2c" stroke-width="1.600"/></svg></task-app>
</div><div class="sp"></div>
<div class="tray">
<svg width="16" height="16" fill="none" stroke="#fff" style="margin-right:20px"><circle cx="5.500" cy="8" r="2.800"/><path d="M.5 15.500c0-3 2-4.500 5-4.500s4.500 1.500 4.500 4.500"/><circle cx="11" cy="4" r="2.500"/><path d="M11.500 8c2.500 0 4 1 4 3.500"/></svg>
<svg width="13" height="8" fill="none" stroke="#fff" stroke-width="1.200" style="margin-right:10px"><path d="M1 7l5.500-5.500L12 7"/></svg>
<svg width="16" height="10" fill="none" stroke="#fff" style="margin-right:7px"><rect x=".5" y=".5" width="13" height="9"/><rect x="2" y="2" width="4" height="6" fill="#fff" stroke="none"/><path d="M14.500 3.500h1v3h-1"/></svg>
<svg width="15" height="12" fill="none" stroke="#fff"><path d="M.5 4v4h2.500L6.500 11V1L3 4zM9 4l4 4M13 4l-4 4"/></svg>
<div class="clock">22:05<br>10.12.2017</div>
<div class="nt"><svg width="16" height="14" fill="#fff"><path d="M0 0h16v10H7l-3 4v-4H0z"/><path d="M3 3h10M3 6h10" stroke="#000"/></svg><span class="b">3</span></div>
</div>`);
</script>
</body></html>
